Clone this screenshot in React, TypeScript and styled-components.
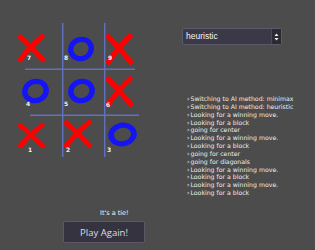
import * as React from "react";
import styled, { createGlobalStyle } from "styled-components";

const GlobalStyle = createGlobalStyle`
  html, body {
    margin: 0;
    padding: 0;
    background: #4c4c4c;
  }
  body {
    width: 315px;
    height: 250px;
    overflow: hidden;
    font-family: "Liberation Sans", Arial, sans-serif;
  }
`;

type Mark = "x" | "o";

interface CellData {
  num: number;
  mark: Mark;
  mx: number;
  my: number;
  mw: number;
  mh: number;
  nx: number;
  ny: number;
}

// measured off the board, relative to each cell's corner
const cells: CellData[] = [
  { num: 7, mark: "x", mx: 0, my: 10, mw: 29, mh: 30, nx: 10, ny: 31 },
  { num: 8, mark: "o", mx: 4, my: 12, mw: 28, mh: 28, nx: 1, ny: 31 },
  { num: 9, mark: "x", mx: 0, my: 9, mw: 29, mh: 34, nx: 3, ny: 31 },
  { num: 4, mark: "o", mx: 4, my: 7, mw: 29, mh: 28, nx: 9, ny: 30 },
  { num: 5, mark: "o", mx: 4, my: 7, mw: 29, mh: 28, nx: 1, ny: 30 },
  { num: 6, mark: "x", mx: 0, my: 5, mw: 29, mh: 33, nx: 1, ny: 31 },
  { num: 1, mark: "x", mx: 0, my: 6, mw: 29, mh: 27, nx: 11, ny: 30 },
  { num: 2, mark: "x", mx: 0, my: 3, mw: 30, mh: 30, nx: 3, ny: 30 },
  { num: 3, mark: "o", mx: 2, my: 5, mw: 31, mh: 27, nx: 2, ny: 30 },
];

const logLines = [
  "Switching to AI method: minimax",
  "Switching to AI method: heuristic",
  "Looking for a winning move.",
  "Looking for a block",
  "going for center",
  "Looking for a winning move.",
  "Looking for a block",
  "going for center",
  "going for diagonals",
  "Looking for a winning move.",
  "Looking for a block",
  "Looking for a winning move.",
  "Looking for a block",
];

const Page = styled.div`
  display: flex;
  width: 315px;
  height: 250px;
`;

const LeftColumn = styled.div`
  display: flex;
  flex-direction: column;
  padding: 23px 0 0 17px;
  width: 148px;
`;

const Board = styled.div`
  position: relative;
  display: grid;
  grid-template-columns: 46px 42px 42px;
  grid-template-rows: 47px 46px 41px;
`;

const Lines = styled.svg`
  position: absolute;
  left: 0;
  top: 0;
  pointer-events: none;
`;

const Cell = styled.div`
  position: relative;
`;

const MarkSvg = styled.svg<{ $x: number; $y: number }>`
  position: absolute;
  left: ${p => p.$x}px;
  top: ${p => p.$y}px;
`;

const CellNumber = styled.span<{ $x: number; $y: number }>`
  position: absolute;
  left: ${p => p.$x}px;
  top: ${p => p.$y}px;
  font-family: "DejaVu Sans", sans-serif;
  font-size: 6px;
  font-weight: bold;
  line-height: 7px;
  color: #f2f2f2;
`;

const Status = styled.div`
  margin: 52px 0 0 83px;
  font-family: "DejaVu Sans", sans-serif;
  font-size: 6.5px;
  line-height: 8px;
  color: #f4f4f4;
`;

const PlayButton = styled.button`
  margin: 4px 0 0 46px;
  width: 82px;
  height: 22px;
  padding: 0;
  border: 1px solid #5a5866;
  border-radius: 2px;
  background: #363341;
  color: #dedde2;
  font-family: "Open Sans", "Liberation Sans", sans-serif;
  font-size: 9.5px;
  cursor: pointer;
`;

const RightColumn = styled.div`
  display: flex;
  flex-direction: column;
  padding: 28px 0 0 17px;
`;

const SelectBox = styled.div`
  display: flex;
  width: 100px;
  height: 17px;
  box-sizing: border-box;
  border: 1px solid #5c5a6a;
  border-radius: 2px;
  background: #3b3847;
`;

const SelectLabel = styled.div`
  flex: 1;
  padding-left: 3px;
  font-size: 8.5px;
  line-height: 15px;
  color: #f4f4f4;
`;

const SelectArrows = styled.div`
  display: flex;
  align-items: center;
  justify-content: center;
  width: 9px;
  background: #2b2a33;
  border-left: 1px solid #4a4858;
`;

const Log = styled.div`
  margin: 50px 0 0 5px;
  font-family: "DejaVu Sans", sans-serif;
  font-size: 6.2px;
  line-height: 7.85px;
  color: #ececec;
  white-space: nowrap;
`;

const LogLine = styled.div`
  &::before {
    content: "›";
    margin-right: 1px;
  }
`;

const XMark: React.FC<{ w: number; h: number; x: number; y: number }> = ({ w, h, x, y }) => (
  <MarkSvg $x={x} $y={y} width={w} height={h} viewBox="0 0 30 30" preserveAspectRatio="none">
    <g fill="none" stroke="#ff0000" strokeWidth="5" strokeLinecap="round">
      <path d="M3.5 4 Q15 14 26.5 26.5" />
      <path d="M26 3.5 Q13 14 3.5 26.5" />
    </g>
  </MarkSvg>
);

const OMark: React.FC<{ w: number; h: number; x: number; y: number }> = ({ w, h, x, y }) => (
  <MarkSvg $x={x} $y={y} width={w} height={h} viewBox="0 0 30 30" preserveAspectRatio="none">
    <ellipse
      cx="15"
      cy="15"
      rx="11.2"
      ry="10.2"
      transform="rotate(-25 15 15)"
      fill="none"
      stroke="#1414f5"
      strokeWidth="5.6"
    />
  </MarkSvg>
);

const App: React.FC = () => (
  <>
    <GlobalStyle />
    <Page>
      <LeftColumn>
        <Board>
          {cells.map(c => (
            <Cell key={c.num}>
              {c.mark === "x" ? (
                <XMark w={c.mw} h={c.mh} x={c.mx} y={c.my} />
              ) : (
                <OMark w={c.mw} h={c.mh} x={c.mx} y={c.my} />
              )}
              <CellNumber $x={c.nx} $y={c.ny}>
                {c.num}
              </CellNumber>
            </Cell>
          ))}
          <Lines width="130" height="134" viewBox="0 0 130 134">
            <g stroke="#6170bd" strokeWidth="1.4">
              <line x1="45.7" y1="0" x2="45.7" y2="134" />
              <line x1="87.7" y1="0" x2="87.7" y2="134" />
              <line x1="8" y1="46.3" x2="118" y2="46.3" />
              <line x1="13" y1="92.3" x2="122" y2="92.3" />
            </g>
          </Lines>
        </Board>
        <Status>It's a tie!</Status>
        <PlayButton>Play Again!</PlayButton>
      </LeftColumn>
      <RightColumn>
        <SelectBox>
          <SelectLabel>heuristic</SelectLabel>
          <SelectArrows>
            <svg width="5" height="8" viewBox="0 0 5 8">
              <path d="M2.5 0.5 L4.5 3 L0.5 3 Z M2.5 7.5 L4.5 5 L0.5 5 Z" fill="#f0f0f0" />
            </svg>
          </SelectArrows>
        </SelectBox>
        <Log>
          {logLines.map((line, i) => (
            <LogLine key={i}>{line}</LogLine>
          ))}
        </Log>
      </RightColumn>
    </Page>
  </>
);

export default App;
